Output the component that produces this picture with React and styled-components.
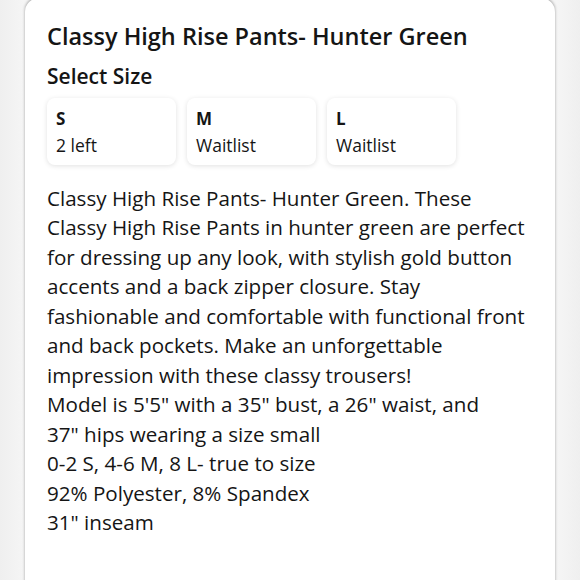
import React from "react";
import styled, { createGlobalStyle } from "styled-components";

const Global = createGlobalStyle`
  html, body { margin: 0; padding: 0; background: #f1f1f1; }
  body { font-family: "Open Sans", "Noto Sans", sans-serif; color: #151515; -webkit-font-smoothing: antialiased; }
`;

const Page = styled.div`
  width: 580px;
  height: 580px;
  overflow: hidden;
  background: linear-gradient(90deg, #efefef 0%, #f5f5f5 4%, #f5f5f5 96%, #efefef 100%);
  display: flex;
  justify-content: center;
`;

const Card = styled.div`
  width: 530px;
  margin-top: -2px;
  height: 600px;
  background: #ffffff;
  border-radius: 14px 14px 0 0;
  box-shadow: 0 -1px 3px rgba(0, 0, 0, 0.35);
  padding: 23px 22px 0 22px;
  box-sizing: border-box;
`;

const Title = styled.h1`
  margin: 0;
  font-size: 23.5px;
  font-weight: 600;
  line-height: 30px;
`;

const Subtitle = styled.h2`
  margin: 11px 0 0 0;
  font-size: 21px;
  font-weight: 600;
  line-height: 28px;
`;

const SizeRow = styled.div`
  display: flex;
  gap: 11px;
  margin-top: 8px;
`;

const SizeCard = styled.div`
  width: 129px;
  height: 67px;
  box-sizing: border-box;
  padding: 10px 9px 8px;
  border-radius: 8px;
  background: #fff;
  box-shadow: 0 1px 5px rgba(0, 0, 0, 0.12);
  display: flex;
  flex-direction: column;
`;

const SizeLabel = styled.div`
  font-size: 17px;
  font-weight: 700;
  line-height: 22px;
`;

const SizeStatus = styled.div`
  font-size: 17.5px;
  font-weight: 400;
  line-height: 24px;
  margin-top: 3px;
`;

const Description = styled.div`
  margin-top: 19px;
  font-size: 20.6px;
  line-height: 29.45px;
  font-weight: 400;
`;

const Line = styled.span`
  display: block;
  white-space: nowrap;
`;

const sizes = [
  { label: "S", status: "2 left" },
  { label: "M", status: "Waitlist" },
  { label: "L", status: "Waitlist" },
];

const lines = [
  "Classy High Rise Pants- Hunter Green. These",
  "Classy High Rise Pants in hunter green are perfect",
  "for dressing up any look, with stylish gold button",
  "accents and a back zipper closure. Stay",
  "fashionable and comfortable with functional front",
  "and back pockets. Make an unforgettable",
  "impression with these classy trousers!",
  'Model is 5\'5" with a 35" bust, a 26" waist, and',
  '37" hips wearing a size small',
  "0-2 S, 4-6 M, 8 L- true to size",
  "92% Polyester, 8% Spandex",
  '31" inseam',
];

export default function App() {
  return (
    <>
      <Global />
      <Page>
        <Card>
          <Title>Classy High Rise Pants- Hunter Green</Title>
          <Subtitle>Select Size</Subtitle>
          <SizeRow>
            {sizes.map((s) => (
              <SizeCard key={s.label}>
                <SizeLabel>{s.label}</SizeLabel>
                <SizeStatus>{s.status}</SizeStatus>
              </SizeCard>
            ))}
          </SizeRow>
          <Description>
            {lines.map((l, i) => (
              <Line key={i}>{l}</Line>
            ))}
          </Description>
        </Card>
      </Page>
    </>
  );
}
